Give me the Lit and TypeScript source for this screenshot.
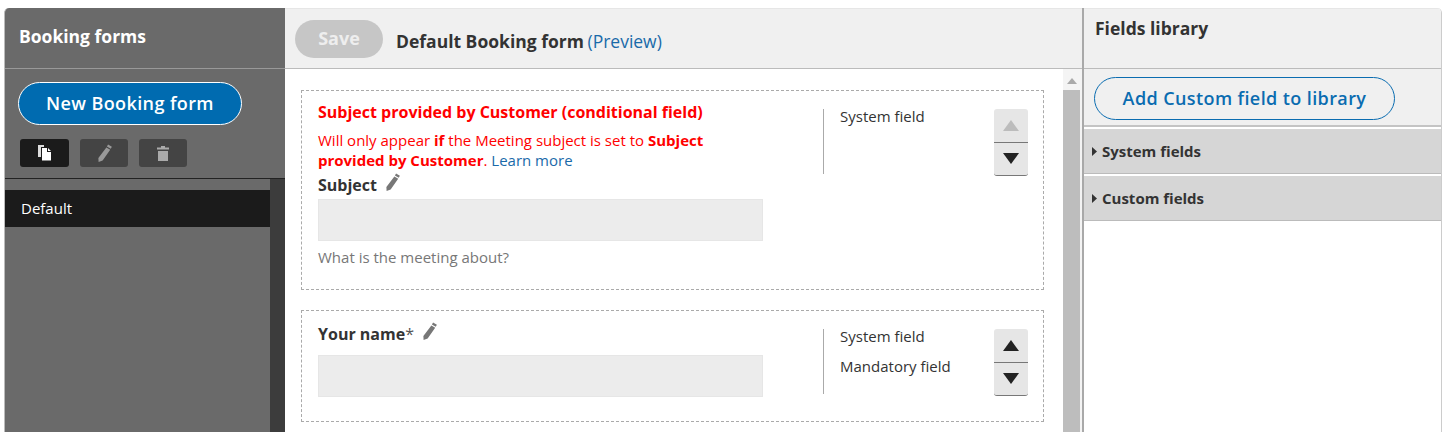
import { LitElement, html, css } from "lit";
import { customElement } from "lit/decorators.js";

const pencil = (c: string, s: number) => html`<svg class="ic" width=${s} height=${s} viewBox="0 0 16 16"><path fill=${c} d="M11.6 0.4 15 2.4 14 4.2 10.6 2.2ZM10.1 3.1 13.5 5.1 6.8 14.6 3.2 16 3 12.4Z"/></svg>`;
const tri = (up: boolean, c: string) => html`<svg width="16" height="11" viewBox="0 0 16 11"><path fill=${c} d=${up ? "M8 0 16 11H0Z" : "M0 0H16L8 11Z"}/></svg>`;

@customElement("app-root")
export class AppRoot extends LitElement {
  static styles = css`
    :host { display: block; width: 1448px; height: 432px; overflow: hidden; background: #fff; font-family: "Open Sans", sans-serif; font-size: 15px; color: #333; }
    * { box-sizing: border-box; }
    .app { display: flex; height: 432px; padding: 8px 6px 0 4px; }
    .left { width: 281px; flex: none; background: #6a6a6a; border-left: 1px solid #bbb; border-top-left-radius: 5px; display: flex; flex-direction: column; color: #fff; }
    .lhead { height: 60px; padding: 15px 0 0 14px; font-size: 17.5px; font-weight: 700; line-height: 26px; flex: none; }
    .ltools { height: 111px; flex: none; border-top: 1px solid #999; border-bottom: 1px solid #222; padding: 13px 0 0 13px; }
    .new { width: 224px; height: 43px; border-radius: 22px; background: #006bb0; border: 1px solid #fff; color: #fff; font: 600 18px/40px "Open Sans", sans-serif; text-align: center; letter-spacing: 0.4px; }
    .tools { display: flex; gap: 11px; margin: 14px 0 0 2px; }
    .tool { width: 48px; height: 28px; border-radius: 3px; background: #444; display: flex; align-items: center; justify-content: center; }
    .tool.on { width: 49px; background: #1b1b1b; }
    .llist { flex: 1; display: flex; min-height: 0; }
    .items { flex: 1; padding-top: 11px; }
    .item { height: 37px; background: #1b1b1b; padding-left: 16px; font-size: 15px; line-height: 37px; }
    .lscroll { width: 15px; background: #3c3c3c; }
    .center { width: 797px; flex: none; display: flex; flex-direction: column; min-height: 0; }
    .chead { height: 61px; flex: none; background: #f0f0f0; border-top: 1px solid #e6e6e6; border-bottom: 1px solid #bbb; display: flex; align-items: center; padding: 0 0 0 10px; }
    .save { width: 88px; height: 38px; margin-top: 0; border-radius: 19px; background: #c6c6c6; color: #eee; font: 700 18px/36px "Open Sans", sans-serif; text-align: center; }
    .ctitle { margin: 4px 0 0 13px; font-size: 17.5px; font-weight: 700; }
    .ctitle span { font-weight: 400; color: #1a6aa9; margin-left: -1px; }
    .cbody { flex: 1; display: flex; min-height: 0; overflow: hidden; }
    .cards { flex: 1; padding: 21px 0 0 16px; display: flex; flex-direction: column; gap: 20px; }
    .card { width: 743px; flex: none; border: 1px dashed #aaa; display: flex; padding-left: 16px; }
    .c1 { height: 200px; }
    .c2 { height: 112px; }
    .main { width: 445px; flex: none; }
    .red { color: #f00; }
    .ttl { font-size: 16px; font-weight: 700; line-height: 20px; margin-top: 11px; }
    .msg { font-size: 15px; line-height: 20px; width: 420px; margin-top: 8px; }
    .msg a, .link { color: #1a6aa9; }
    .lbl { font-size: 16px; font-weight: 700; line-height: 20px; display: flex; align-items: center; gap: 6px; }
    .lbl .star { font-weight: 400; margin-left: -6px; color: #555; }
    .c1 .lbl { margin-top: 5px; }
    .c2 .lbl { margin-top: 13px; }
    .ic { display: block; margin-top: -6px; }
    .tool .ic { margin-top: 0; }
    .input { height: 42px; background: #ececec; border: 1px solid #e6e6e6; }
    .c1 .input { margin-top: 4px; }
    .c2 .input { margin-top: 11px; }
    .hint { margin-top: 6px; font-size: 15px; color: #777; line-height: 20px; }
    .meta { width: 171px; margin: 18px 0 0 60px; height: 65px; border-left: 1px solid #aaa; padding-left: 16px; flex: none; font-size: 15px; line-height: 30px; }
    .meta div { height: 30px; margin-top: -8px; margin-bottom: 8px; }
    .arrows { width: 34px; height: 67px; margin-top: 18px; border-radius: 3px; background: #e6e6e6; border-bottom: 1px solid #777; display: flex; flex-direction: column; flex: none; }
    .arrows div { flex: 1; display: flex; align-items: center; justify-content: center; }
    .arrows div:first-child { border-bottom: 1px solid #777; }
    .sb { width: 19px; flex: none; background: #f4f4f4; display: flex; flex-direction: column; align-items: center; padding: 9px 2px 0 0; }
    .sb svg { flex: none; }
    .thumb { width: 17px; flex: 1; margin-top: 6px; background: #bdbdbd; }
    .right { flex: 1; min-width: 0; border-left: 2px solid #a9a9a9; border-right: 1px solid #ccc; border-top-right-radius: 5px; overflow: hidden; display: flex; flex-direction: column; }
    .rhead { height: 61px; flex: none; background: #f0f0f0; border-top: 1px solid #e6e6e6; border-bottom: 1px solid #bbb; padding: 7px 0 0 11px; font-size: 17.5px; font-weight: 700; line-height: 24px; }
    .rtool { height: 58px; flex: none; background: #f0f0f0; padding: 8px 0 0 10px; border-bottom: 2px solid #c4c4c4; }
    .add { width: 301px; height: 43px; border: 1px solid #0a6cb0; border-radius: 22px; color: #0a6cb0; font: 600 18px/41px "Open Sans", sans-serif; text-align: center; letter-spacing: 0.4px; }
    .acc { height: 45px; flex: none; margin-top: 2px; background: #d6d6d6; border-bottom: 1px solid #bbb; display: flex; align-items: center; padding-left: 8px; gap: 5px; font-size: 15px; font-weight: 700; }
  `;

  render() {
    const arrows = (upOff: boolean) => html`<div class="arrows"><div>${tri(true, upOff ? "#bcbcbc" : "#222")}</div><div>${tri(false, "#222")}</div></div>`;
    return html`<div class="app">
      <section class="left">
        <div class="lhead">Booking forms</div>
        <div class="ltools">
          <div class="new">New Booking form</div>
          <div class="tools">
            <div class="tool on"><svg width="14" height="16" viewBox="0 0 14 16"><path fill="#ddd" d="M0 0H6V2H3V12H0Z"/><path fill="#fff" d="M4 3H9V7H13V15.5H4ZM10 3 13 6H10Z"/></svg></div>
            <div class="tool">${pencil("#999", 18)}</div>
            <div class="tool"><svg width="12" height="15" viewBox="0 0 12 15"><path fill="#aaa" d="M4 0H8V1.5H12V3.5H0V1.5H4ZM1 5H11V15H1Z"/></svg></div>
          </div>
        </div>
        <div class="llist">
          <div class="items"><div class="item">Default</div></div>
          <div class="lscroll"></div>
        </div>
      </section>
      <section class="center">
        <div class="chead">
          <div class="save">Save</div>
          <div class="ctitle">Default Booking form <span>(Preview)</span></div>
        </div>
        <div class="cbody">
          <div class="cards">
            <div class="card c1">
              <div class="main">
                <div class="ttl red">Subject provided by Customer (conditional field)</div>
                <div class="msg red">Will only appear <b>if</b> the Meeting subject is set to <b>Subject provided by Customer</b>. <a>Learn more</a></div>
                <div class="lbl">Subject ${pencil("#777", 18)}</div>
                <div class="input"></div>
                <div class="hint">What is the meeting about?</div>
              </div>
              <div class="meta"><div>System field</div></div>
              ${arrows(true)}
            </div>
            <div class="card c2">
              <div class="main">
                <div class="lbl">Your name <span class="star">*</span> ${pencil("#777", 18)}</div>
                <div class="input"></div>
              </div>
              <div class="meta"><div>System field</div><div>Mandatory field</div></div>
              ${arrows(false)}
            </div>
          </div>
          <div class="sb">
            <svg width="10" height="6" viewBox="0 0 10 6"><path fill="#aaa" d="M5 0 10 6H0Z"/></svg>
            <div class="thumb"></div>
          </div>
        </div>
      </section>
      <section class="right">
        <div class="rhead">Fields library</div>
        <div class="rtool"><div class="add">Add Custom field to library</div></div>
        <div class="acc"><svg width="5" height="9" viewBox="0 0 5 9"><path fill="#333" d="M0 0 5 4.5 0 9Z"/></svg>System fields</div>
        <div class="acc"><svg width="5" height="9" viewBox="0 0 5 9"><path fill="#333" d="M0 0 5 4.5 0 9Z"/></svg>Custom fields</div>
      </section>
    </div>`;
  }
}
